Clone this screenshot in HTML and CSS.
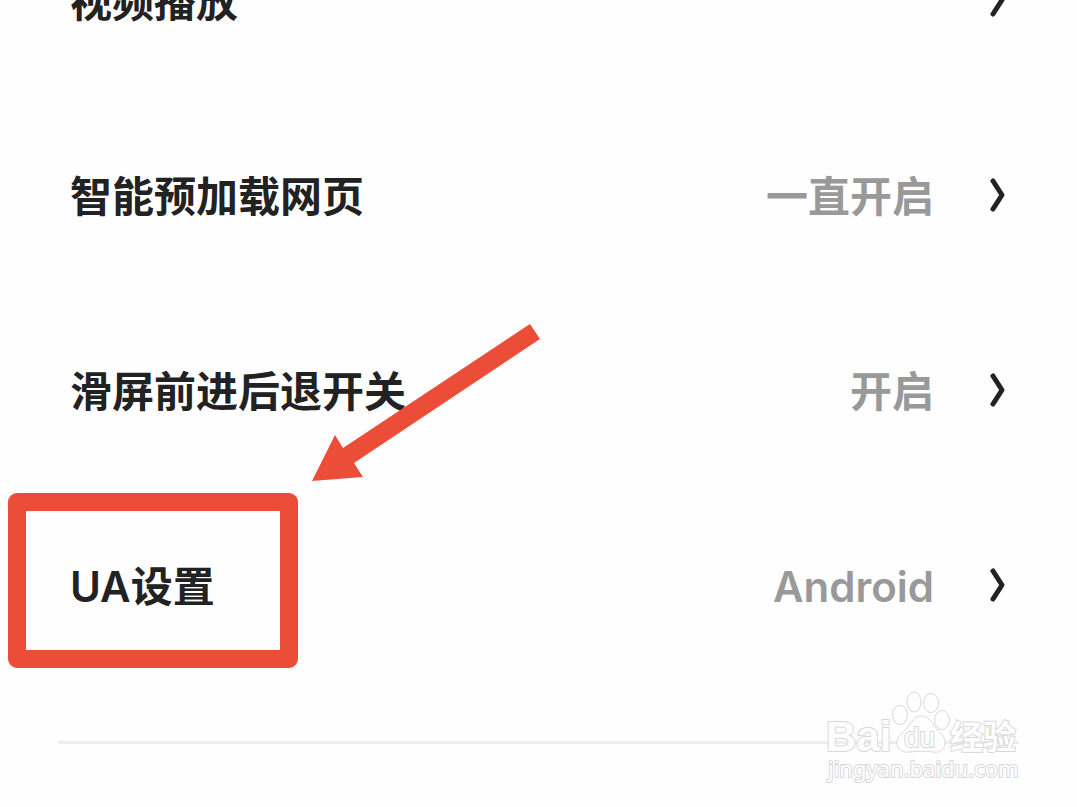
FILE: index.html
```html
<!DOCTYPE html>
<html lang="zh-CN">
<head>
<meta charset="utf-8">
<meta name="viewport" content="width=device-width, initial-scale=1">
<title>设置</title>
<link rel="stylesheet" href="styles.css">
</head>
<body>
<main class="page">
  <div class="settings">
    <button class="row" type="button">
      <span class="label">视频播放</span>
      <svg class="chevron" viewBox="0 0 18 36" aria-hidden="true"><path d="M4 4L13 18L4 32"/></svg>
    </button>
    <button class="row" type="button">
      <span class="label">智能预加载网页</span>
      <span class="value">一直开启</span>
      <svg class="chevron" viewBox="0 0 18 36" aria-hidden="true"><path d="M4 4L13 18L4 32"/></svg>
    </button>
    <button class="row" type="button">
      <span class="label">滑屏前进后退开关</span>
      <span class="value">开启</span>
      <svg class="chevron" viewBox="0 0 18 36" aria-hidden="true"><path d="M4 4L13 18L4 32"/></svg>
    </button>
    <button class="row" type="button">
      <span class="label">UA设置</span>
      <span class="value">Android</span>
      <svg class="chevron" viewBox="0 0 18 36" aria-hidden="true"><path d="M4 4L13 18L4 32"/></svg>
    </button>
  </div>
  <hr class="divider">

  <div class="highlight"></div>
  <svg class="arrow" viewBox="0 0 230 160" aria-hidden="true"><path d="M2 161L25 115L33 128L220 4L230 19L44 143L53 157Z"/></svg>

  <svg class="watermark" viewBox="0 0 200 100" role="img" aria-label="Baidu 经验">
    <text class="brand" x="2" y="61">Bai</text>
    <g class="paw">
      <ellipse cx="76" cy="25" rx="7.500" ry="9.500"/>
      <ellipse cx="90" cy="12" rx="7" ry="10"/>
      <ellipse cx="107" cy="13" rx="7.500" ry="9.500"/>
      <ellipse cx="118" cy="30" rx="7.500" ry="9.500"/>
      <path d="M97 26C104 26 108 32 111 37C115 43 122 46 121 54C120 61 115 63 109 62C101 61 93 61 86 62C78 63 73 59 73 53C73 46 79 43 83 38C87 33 90 26 97 26Z"/>
    </g>
    <text class="du" x="80" y="57">du</text>
    <text class="cjk" x="126" y="59">经验</text>
    <text class="site" x="4" y="87">jingyan.baidu.com</text>
  </svg>
</main>
</body>
</html>
```
FILE: styles.css
```css
* {
  box-sizing: border-box;
}

body {
  margin: 0;
  background: #fefefe;
  color: #222;
  font-family: Inter, "Noto Sans CJK SC", sans-serif;
}

.page {
  position: relative;
  min-height: 100vh;
  overflow: hidden;
}

.settings {
  display: flex;
  flex-direction: column;
  margin-top: -98px;
}

.row {
  display: flex;
  align-items: center;
  width: 100%;
  height: 195px;
  padding: 0 70px;
  border: 0;
  background: none;
  color: inherit;
  font: inherit;
  font-size: 42px;
  font-weight: 600;
  line-height: 60px;
  text-align: left;
  white-space: nowrap;
}

.label,
.value {
  padding-top: 4px;
}

.label {
  flex: 1;
}

.value {
  margin-right: 55px;
  color: #999;
}

.chevron {
  width: 18px;
  height: 36px;
  fill: none;
  stroke: #222;
  stroke-width: 5;
  stroke-linecap: round;
  stroke-linejoin: round;
}

.divider {
  height: 3px;
  margin: 59px 58px 0;
  border: 0;
  background: #ededed;
}

.highlight {
  position: absolute;
  left: 8px;
  top: 493px;
  width: 290px;
  height: 175px;
  border: 18px solid #eb4d39;
  border-radius: 9px;
}

.arrow {
  position: absolute;
  left: 310px;
  top: 320px;
  width: 230px;
  height: 160px;
  overflow: visible;
  fill: #eb4d39;
}

.watermark {
  position: absolute;
  left: 824px;
  top: 690px;
  width: 200px;
  height: 100px;
  fill: #fefefe;
  stroke: #d8d8d8;
  stroke-width: 1;
  overflow: visible;
}

.watermark text {
  paint-order: stroke;
  stroke-width: 2;
}

.brand {
  font: 700 42px "Liberation Sans", sans-serif;
}

.du {
  font: 400 28px "Liberation Sans", sans-serif;
}

.cjk {
  font: 700 33px "Noto Sans CJK SC", sans-serif;
}

.site {
  font: 400 22px "Noto Sans", sans-serif;
}
```
